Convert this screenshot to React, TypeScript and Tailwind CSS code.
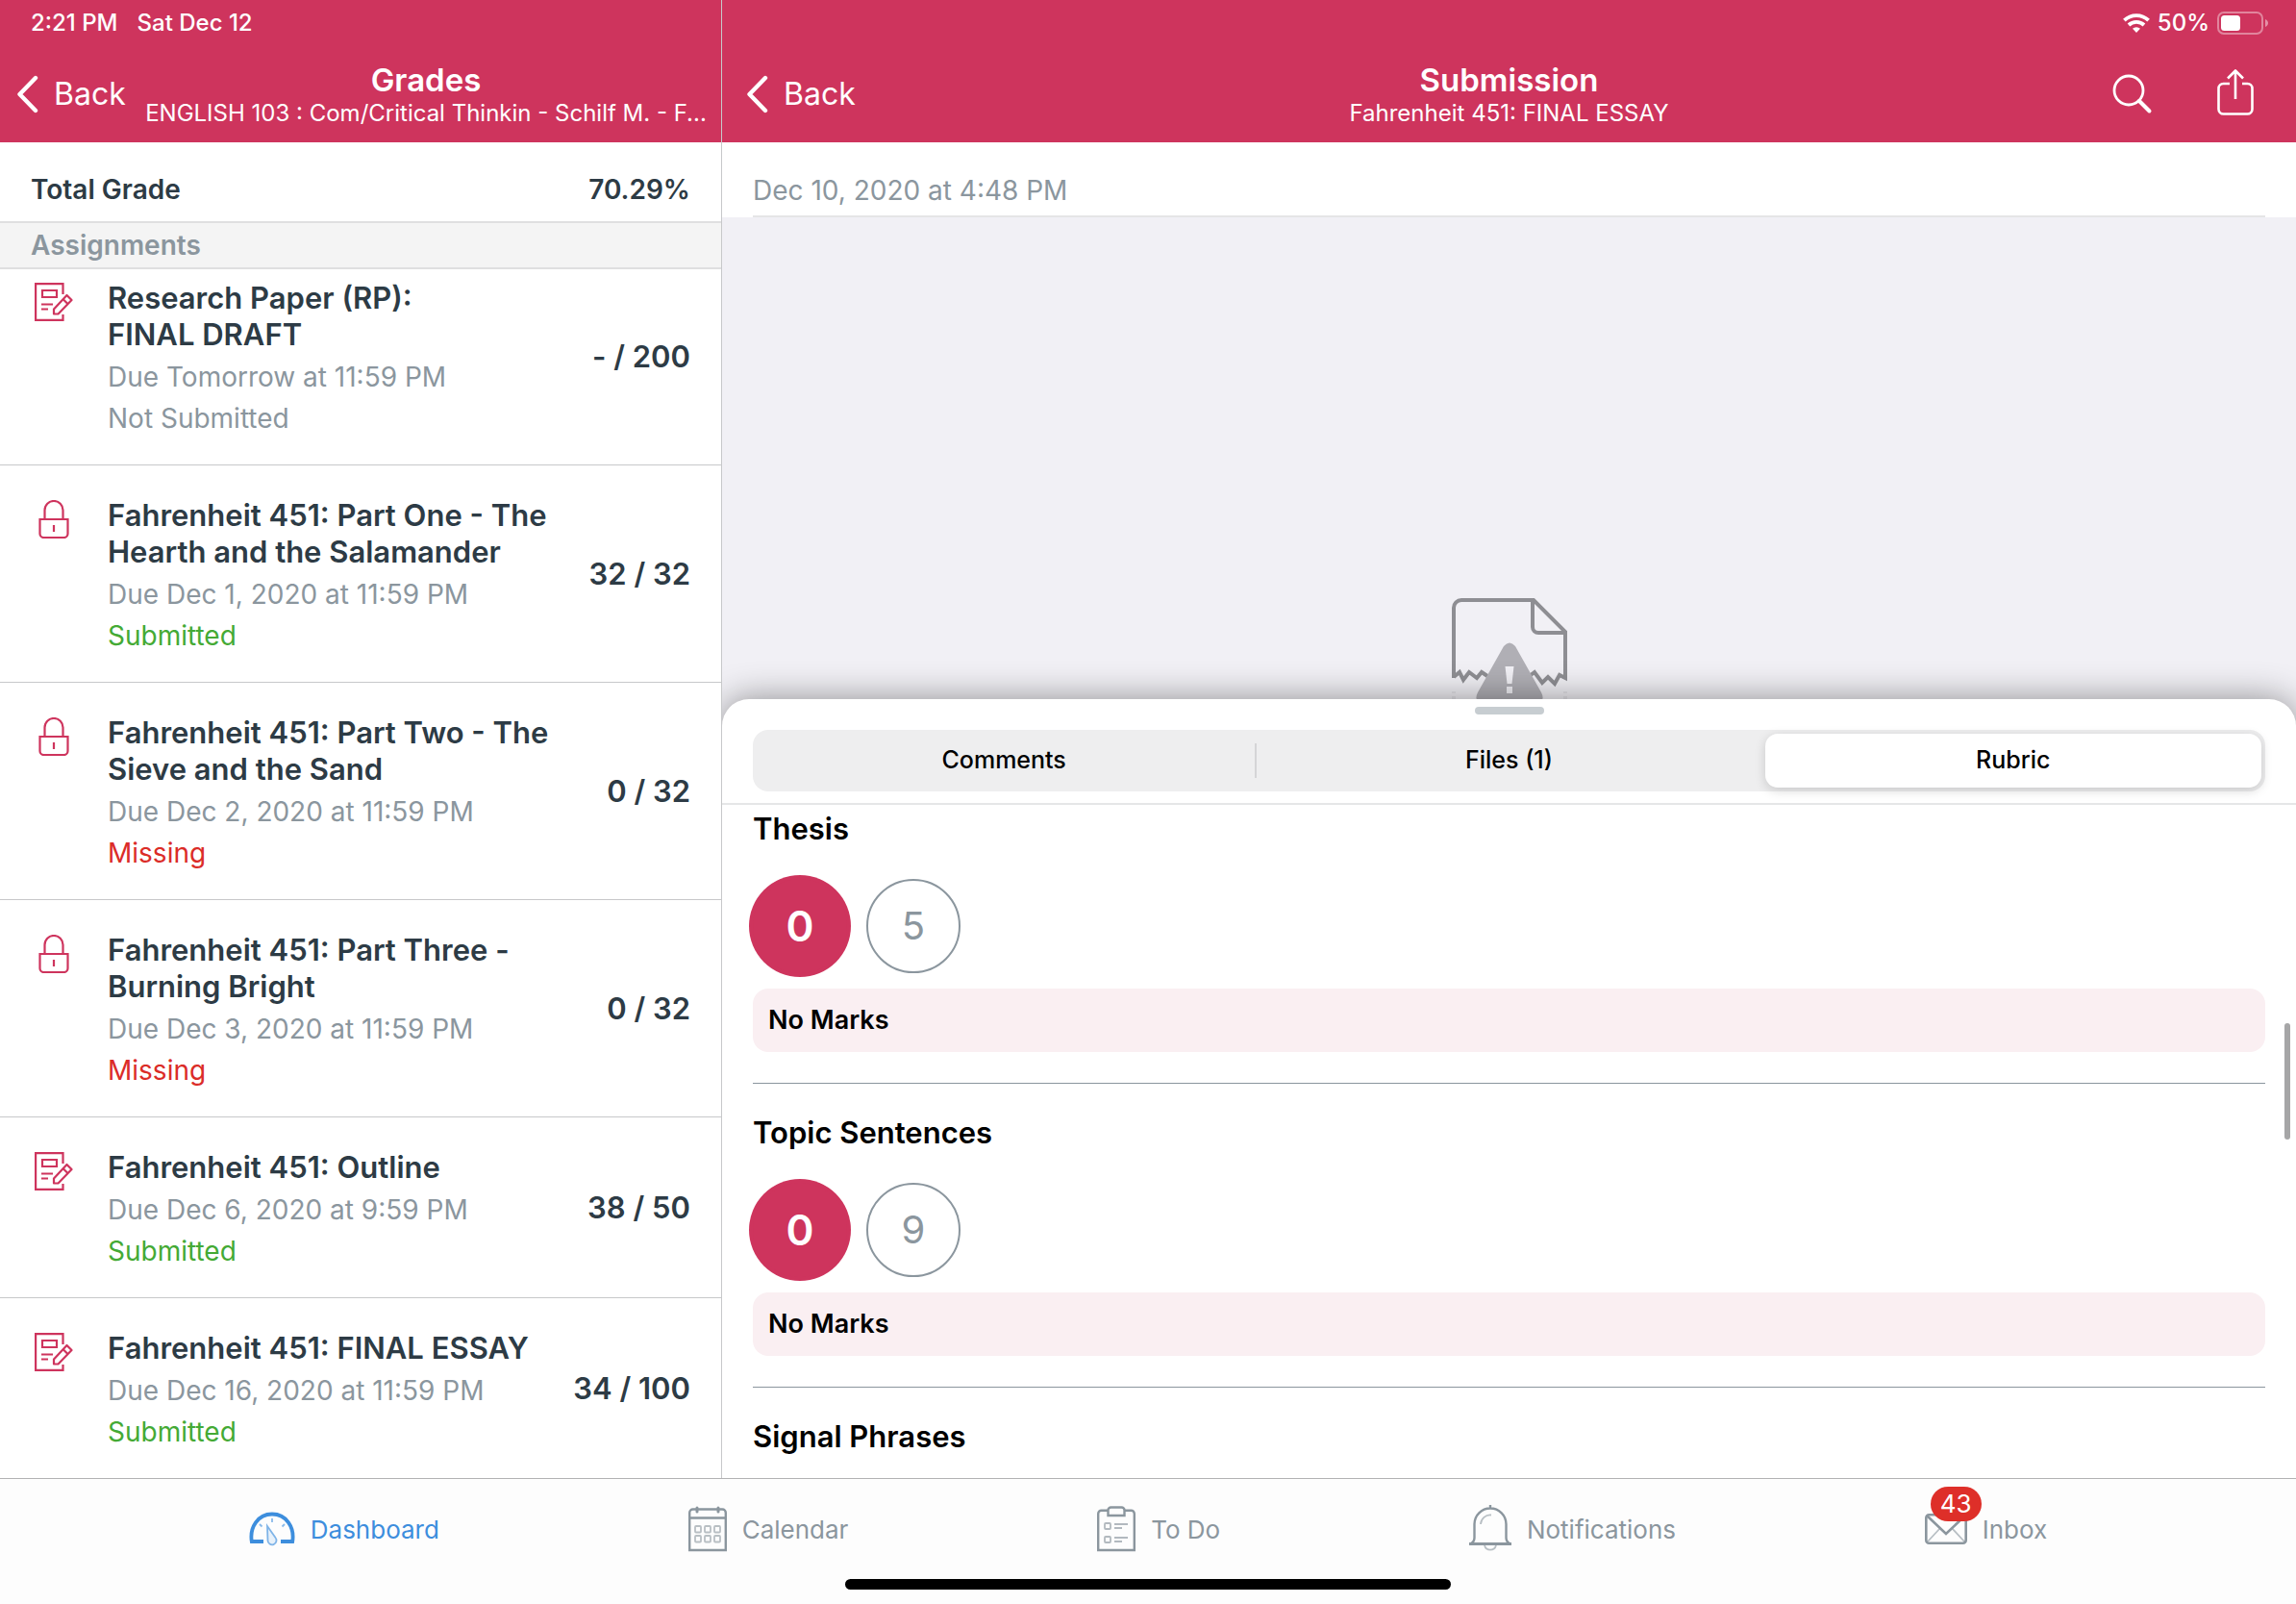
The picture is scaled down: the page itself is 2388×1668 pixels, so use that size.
import { useState } from 'react'

type Status = 'Not Submitted' | 'Submitted' | 'Missing'

interface Assignment {
  title: string
  due: string
  status: Status
  score: string
  locked?: boolean
}

interface Criterion {
  title: string
  ratings?: number[]
  note?: string
}

const assignments: Assignment[] = [
  { title: 'Research Paper (RP):\nFINAL DRAFT', due: 'Due Tomorrow at 11:59 PM', status: 'Not Submitted', score: '- / 200' },
  { title: 'Fahrenheit 451: Part One - The\nHearth and the Salamander', due: 'Due Dec 1, 2020 at 11:59 PM', status: 'Submitted', score: '32 / 32', locked: true },
  { title: 'Fahrenheit 451: Part Two - The\nSieve and the Sand', due: 'Due Dec 2, 2020 at 11:59 PM', status: 'Missing', score: '0 / 32', locked: true },
  { title: 'Fahrenheit 451: Part Three -\nBurning Bright', due: 'Due Dec 3, 2020 at 11:59 PM', status: 'Missing', score: '0 / 32', locked: true },
  { title: 'Fahrenheit 451: Outline', due: 'Due Dec 6, 2020 at 9:59 PM', status: 'Submitted', score: '38 / 50' },
  { title: 'Fahrenheit 451: FINAL ESSAY', due: 'Due Dec 16, 2020 at 11:59 PM', status: 'Submitted', score: '34 / 100' },
]

const statusColor: Record<Status, string> = {
  'Not Submitted': 'text-[#8b969e]',
  Submitted: 'text-[#44aa35]',
  Missing: 'text-[#db2c28]',
}

const rubric: Criterion[] = [
  { title: 'Thesis', ratings: [0, 5], note: 'No Marks' },
  { title: 'Topic Sentences', ratings: [0, 9], note: 'No Marks' },
  { title: 'Signal Phrases' },
]

/* ── Icons ───────────────────────────────────────────────────── */
function ChevronIcon() {
  return (
    <svg className="shrink-0" width="24" height="40" viewBox="0 0 24 40" fill="none" stroke="currentColor" strokeWidth="4.4" strokeLinecap="round" strokeLinejoin="round">
      <path d="M21 3 4.500 20 21 37" />
    </svg>
  )
}

function WifiIcon() {
  return (
    <svg width="28" height="20" viewBox="0 0 28 20" fill="none" stroke="currentColor" strokeWidth="3.8">
      <path d="M1.4 7.2a18 18 0 0 1 25.2 0" />
      <path d="M6 12a11.6 11.6 0 0 1 16 0" />
      <path d="M14 20l-4-4.2a5.8 5.8 0 0 1 8 0z" fill="currentColor" stroke="none" />
    </svg>
  )
}

function BatteryIcon() {
  return (
    <svg width="54" height="24" viewBox="0 0 54 24" fill="none">
      <rect x="1" y="1" width="46" height="22" rx="6" stroke="#fff" strokeOpacity=".4" strokeWidth="2" />
      <rect x="4" y="4" width="20" height="16" rx="3.5" fill="#fff" />
      <path d="M50 8c4 1.4 4 6.600 0 8z" fill="#fff" fillOpacity=".45" />
    </svg>
  )
}

function SearchIcon() {
  return (
    <svg width="42" height="42" viewBox="0 0 42 42" fill="none" stroke="currentColor" strokeLinecap="round">
      <circle cx="17" cy="17" r="15" strokeWidth="2.800" />
      <path d="M28 28 38.500 38.500" strokeWidth="4" />
    </svg>
  )
}

function ShareIcon() {
  return (
    <svg width="38" height="48" viewBox="0 0 38 48" fill="none" stroke="currentColor" strokeWidth="2.600">
      <path d="M13 15H6.500a5 5 0 0 0-5 5v21.500a5 5 0 0 0 5 5h25a5 5 0 0 0 5-5V20a5 5 0 0 0-5-5H26" />
      <path d="M19 31V2M11 9.500l8-8 8 8" strokeLinejoin="round" />
    </svg>
  )
}

function AssignmentIcon() {
  return (
    <svg width="40" height="40" viewBox="0 0 40 40" fill="none" stroke="currentColor" strokeWidth="2.200">
      <path d="M29.500 12V1.100H1.100v37.800h28.400v-6" />
      <path d="M8 8h15v7H8zM7 22.500h12M7 27.500h7" />
      <path d="M20 32.500v-5L33.500 13l5 5L24.500 32.500z" strokeLinejoin="round" />
      <path d="M29.500 17l5 5" />
    </svg>
  )
}

function LockIcon() {
  return (
    <svg width="40" height="40" viewBox="0 0 40 40" fill="none" stroke="currentColor" strokeWidth="2.200">
      <path d="M10.500 20v-9.500a9.500 9.500 0 0 1 19 0V20" />
      <path d="M5.500 20h29v15a4 4 0 0 1-4 4h-21a4 4 0 0 1-4-4zM20 26v7" />
    </svg>
  )
}

function TornPageIcon() {
  return (
    <svg width="120" height="120" viewBox="0 0 120 120" fill="none">
      <path
        d="M2 83V10a8 8 0 0 1 8-8h75l33 33v48l-6-3-5 9-7-7-6 6-8-11-4 3M37 81l-6-4-5 6-8-6-6 8-4-8-6 5"
        stroke="#8e8e93"
        strokeWidth="4"
      />
      <path d="M84 2v28a6 6 0 0 0 6 6h28" stroke="#8e8e93" strokeWidth="4" />
      <path d="M2 97v2M2 102v18M118 97v2M118 102v18" stroke="#e4e3e8" strokeWidth="4" />
      <path d="M54 50q6-7 12 0l27 48q5 10-6 10H33q-11 0-6-10z" fill="#b0afb5" />
      <path d="M55.500 71h9l-2 18h-5zM57 92h6v7h-6z" fill="#f1f0f5" />
    </svg>
  )
}

function DashboardIcon() {
  return (
    <svg width="48" height="36" viewBox="0 0 48 36" fill="none" stroke="currentColor">
      <path d="M15 31H2.800C.500 16.500 9 2.500 24 2.500S47.500 16.500 45.200 31H33" strokeWidth="3.800" />
      <path d="M24 7v4M11 13l2.500 2.500M37 13l-2.500 2.500" strokeWidth="1.800" opacity=".6" />
      <path d="M19 15l8.500 12a4.500 4.500 0 1 1-8 3z" strokeWidth="1.800" opacity=".65" fill="#dcebf9" />
    </svg>
  )
}

function CalendarIcon() {
  return (
    <svg width="40" height="48" viewBox="0 0 40 48" fill="none" stroke="currentColor">
      <path d="M1.200 46V7a3.500 3.500 0 0 1 3.500-3.500h30.600A3.500 3.500 0 0 1 38.800 7v39zM1.200 12.500h37.600" strokeWidth="2.400" />
      <path d="M9 2v4M31 2v4" strokeWidth="3" strokeLinecap="round" />
      <g strokeWidth="1.800" opacity=".6">
        <rect x="7" y="21" width="6" height="6.500" rx="1" />
        <rect x="17" y="21" width="6" height="6.500" rx="1" />
        <rect x="27" y="21" width="6" height="6.500" rx="1" />
        <rect x="7" y="31" width="6" height="6.500" rx="1" />
        <rect x="17" y="31" width="6" height="6.500" rx="1" />
        <rect x="27" y="31" width="6" height="6.500" rx="1" />
      </g>
    </svg>
  )
}

function TodoIcon() {
  return (
    <svg width="40" height="48" viewBox="0 0 40 48" fill="none" stroke="currentColor">
      <path d="M12 4.800H4.500A3.300 3.300 0 0 0 1.200 8v38h37.600V8a3.300 3.300 0 0 0-3.300-3.200H28" strokeWidth="2.400" />
      <path d="M11.500 10V4.500a3 3 0 0 1 3-3h11a3 3 0 0 1 3 3V10z" strokeWidth="2.400" />
      <g strokeWidth="1.800" opacity=".65">
        <rect x="8" y="18" width="6" height="6" rx="1" />
        <rect x="8" y="32" width="6" height="6" rx="1" />
        <path d="M18 19h14M18 23h8M18 33h14M18 37h8" />
      </g>
    </svg>
  )
}

function BellIcon() {
  return (
    <svg width="44" height="50" viewBox="0 0 44 50" fill="none" stroke="currentColor">
      <path d="M0 40.500h44" strokeWidth="3" />
      <path d="M2 40c3-1.500 3.500-3 3.500-6V20a16.500 16.500 0 0 1 33 0v14c0 3 .500 4.500 3.500 6M22 0v4" strokeWidth="2.400" />
      <path d="M12 20a10 10 0 0 1 11-9.500M16 42a6.200 6.200 0 0 0 12 0" strokeWidth="1.800" opacity=".6" />
    </svg>
  )
}

function InboxIcon() {
  return (
    <svg width="44" height="32" viewBox="0 0 44 32" fill="none" stroke="currentColor">
      <rect x="1.300" y="1.300" width="41.400" height="29.400" rx="3" strokeWidth="2.600" />
      <path d="M3 29l13-14M41 29 28 15" strokeWidth="1.800" opacity=".6" />
      <path d="M2.500 2.500 22 21 41.500 2.500" strokeWidth="2.600" />
    </svg>
  )
}

/* ── Left pane ───────────────────────────────────────────────── */
function AssignmentRow({ item }: { item: Assignment }) {
  return (
    <li className="shrink-0 border-b border-[#c7c8ca] last:border-b-0">
      <a href="#assignment" className="flex pt-[33px] pr-8 pb-[26px] pl-9">
        <span className="mt-[3px] w-[76px] shrink-0 text-[#ce345d]">
          {item.locked ? <LockIcon /> : <AssignmentIcon />}
        </span>
        <span className="flex min-w-0 flex-1 flex-col">
          <span className="mb-1 whitespace-pre-line text-[31px] leading-[38px] font-semibold text-[#2d3b45]">{item.title}</span>
          <span className="text-[28px] leading-[43px] text-[#8b969e]">{item.due}</span>
          <span className={`text-[28px] leading-[43px] ${statusColor[item.status]}`}>{item.status}</span>
        </span>
        <span className="-mt-[7px] self-center text-[31px] leading-[38px] font-semibold whitespace-nowrap text-[#2d3b45]">{item.score}</span>
      </a>
    </li>
  )
}

function GradesPane() {
  return (
    <section className="flex min-h-0 min-w-0 flex-col border-r border-[#c7c8ca]">
      <header className="h-[148px] shrink-0 bg-[#ce345d] text-white">
        <div className="flex h-12 items-center gap-5 px-8 text-[24px] font-medium">
          <span>2:21 PM</span>
          <span>Sat Dec 12</span>
        </div>
        <div className="flex h-[100px] items-center">
          <button className="flex w-[136px] shrink-0 items-center gap-4 pl-4 text-[32px]">
            <ChevronIcon />
            Back
          </button>
          <div className="min-w-0 flex-1 pt-[2px] text-center">
            <h1 className="text-[33px] leading-[38px] font-semibold">Grades</h1>
            <p className="text-[24px] leading-8 whitespace-nowrap">ENGLISH 103 : Com/Critical Thinkin - Schilf M. - F...</p>
          </div>
        </div>
      </header>
      <div className="flex h-[84px] shrink-0 items-center justify-between border-b-2 border-[#dfdfe0] px-8 pt-4 text-[28px] font-semibold text-[#2d3b45]">
        <span>Total Grade</span>
        <span>70.29%</span>
      </div>
      <h2 className="flex h-12 shrink-0 items-center border-b-2 border-[#dfdfe0] bg-[#f4f4f4] px-8 text-[28px] font-semibold text-[#8b969e]">
        Assignments
      </h2>
      {/* scrolled to the end, so the first row is cut at the top */}
      <ul className="flex min-h-0 flex-1 flex-col justify-end overflow-hidden">
        {assignments.map((item) => (
          <AssignmentRow key={item.title} item={item} />
        ))}
      </ul>
    </section>
  )
}

/* ── Rubric sheet ────────────────────────────────────────────── */
function RubricItem({ title, ratings, note }: Criterion) {
  return (
    <li className="border-b border-[#8b969e] py-8 first:pt-[6px] last:border-b-0 last:pb-0">
      <h3 className="text-[31px] leading-[38px] font-semibold">{title}</h3>
      {ratings && (
        <div className="mt-[33px] flex gap-5">
          {ratings.map((points, i) => (
            <button
              key={points}
              className={
                i === 0
                  ? 'size-[98px] rounded-full bg-[#ce345d] text-[44px] font-semibold text-white ring-4 ring-[#ce345d]'
                  : 'size-[98px] rounded-full border-2 border-[#8b969e] text-[40px] text-[#8b969e]'
              }
            >
              {points}
            </button>
          ))}
        </div>
      )}
      {note && <p className="mt-4 rounded-2xl bg-[#faeff2] px-4 text-[27px] leading-[66px] font-semibold">{note}</p>}
    </li>
  )
}

function Sheet() {
  const [active, setActive] = useState('Rubric')

  return (
    <div className="relative flex min-h-0 flex-1 flex-col rounded-t-[28px] bg-white text-black shadow-[0_0_36px_rgba(0,0,0,0.42)]">
      <div className="mx-auto mt-2 h-2 w-[72px] shrink-0 rounded-full bg-[#c7cdd1]" />
      <div className="shrink-0 border-b-2 border-[#e5e6e7] px-8 pt-4 pb-3">
        <div role="tablist" className="grid h-16 grid-cols-3 rounded-2xl bg-[#eeeeef] py-1">
          {['Comments', 'Files (1)', 'Rubric'].map((name, i) => (
            <div key={name} className="flex items-center">
              <button
                role="tab"
                aria-selected={active === name}
                onClick={() => setActive(name)}
                className={`mx-1 h-full flex-1 rounded-[13px] text-[25px] font-medium ${active === name ? 'bg-white shadow-[0_3px_12px_rgba(0,0,0,0.16)]' : ''}`}
              >
                {name}
              </button>
              {i === 0 && <span className="h-9 w-[2px] bg-[#d5d5d7]" />}
            </div>
          ))}
        </div>
      </div>
      <ul className="min-h-0 flex-1 overflow-hidden px-8">
        {rubric.map((item) => (
          <RubricItem key={item.title} {...item} />
        ))}
      </ul>
      <div className="absolute top-[337px] right-[6px] h-[121px] w-[6px] rounded-full bg-[#a6a6a7]" />
    </div>
  )
}

/* ── Right pane ──────────────────────────────────────────────── */
function SubmissionPane() {
  return (
    <section className="flex min-h-0 min-w-0 flex-col overflow-hidden">
      <header className="h-[148px] shrink-0 bg-[#ce345d] text-white">
        <div className="flex h-12 items-center justify-end gap-2 pr-7 text-[24px] font-medium">
          <WifiIcon />
          <span>50%</span>
          <BatteryIcon />
        </div>
        <div className="grid h-[100px] grid-cols-[1fr_auto_1fr] items-center">
          <button className="flex items-center gap-4 justify-self-start pl-6 text-[32px]">
            <ChevronIcon />
            Back
          </button>
          <div className="pt-[2px] text-center">
            <h1 className="text-[33px] leading-[38px] font-semibold">Submission</h1>
            <p className="text-[24px] leading-8">Fahrenheit 451: FINAL ESSAY</p>
          </div>
          <div className="flex items-center gap-[67px] justify-self-end pr-11">
            <button aria-label="Search">
              <SearchIcon />
            </button>
            <button aria-label="Share" className="-mt-1">
              <ShareIcon />
            </button>
          </div>
        </div>
      </header>
      <div className="shrink-0 bg-white px-8">
        <p className="flex h-[78px] items-center border-b-2 border-[#e5e5e6] pt-6 text-[28px] text-[#8b969e]">Dec 10, 2020 at 4:48 PM</p>
      </div>
      <div className="flex min-h-0 flex-1 flex-col bg-[#f1f0f5]">
        <div className="flex h-[501px] shrink-0 justify-center overflow-hidden pt-[396px]">
          <TornPageIcon />
        </div>
        <Sheet />
      </div>
    </section>
  )
}

/* ── Tab bar ─────────────────────────────────────────────────── */
const tabs = [
  { label: 'Dashboard', icon: <DashboardIcon />, active: true },
  { label: 'Calendar', icon: <CalendarIcon /> },
  { label: 'To Do', icon: <TodoIcon /> },
  { label: 'Notifications', icon: <BellIcon /> },
  { label: 'Inbox', icon: <InboxIcon />, badge: 43 },
]

function TabBar() {
  return (
    <footer className="shrink-0 border-t border-[#b2b2b3] bg-[#fdfdfd] pb-[15px]">
      <nav className="flex h-[104px] items-center justify-evenly">
        {tabs.map(({ label, icon, active, badge }) => (
          <a
            key={label}
            href={`#${label}`}
            className={`flex items-center gap-4 text-[26px] ${active ? 'text-[#3d8edd]' : 'text-[#8b969e]'}`}
          >
            <span className="relative">
              {icon}
              {badge && (
                <span className="absolute -top-7 left-[6px] h-9 rounded-full bg-[#de2f29] px-[10px] text-[26px] leading-9 text-white">
                  {badge}
                </span>
              )}
            </span>
            {label}
          </a>
        ))}
      </nav>
      <div className="mx-auto h-[11px] w-[630px] rounded-full bg-black" />
    </footer>
  )
}

export default function App() {
  return (
    <div className="flex h-screen flex-col bg-white font-['Inter','Liberation_Sans',sans-serif]">
      <main className="grid min-h-0 flex-1 grid-cols-[751fr_1637fr] grid-rows-[minmax(0,1fr)]">
        <GradesPane />
        <SubmissionPane />
      </main>
      <TabBar />
    </div>
  )
}
